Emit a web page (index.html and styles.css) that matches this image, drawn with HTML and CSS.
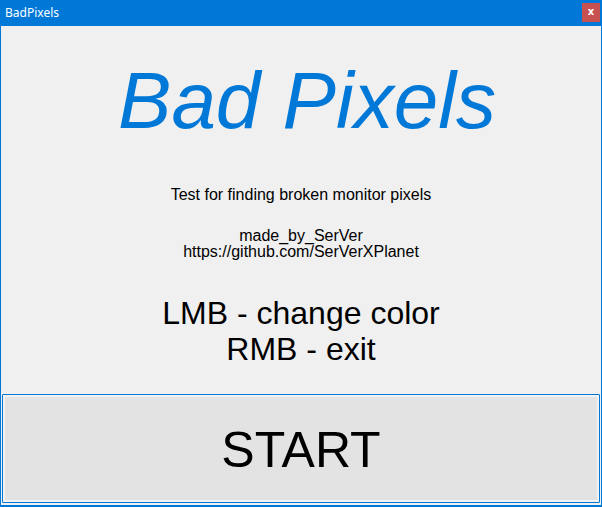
FILE: index.html
```html
<!DOCTYPE html>
<html>
<head>
<meta charset="utf-8">
<link rel="stylesheet" href="styles.css">
</head>
<body>
<div class="window">
  <div class="titlebar">
    <span class="title">BadPixels</span>
    <span class="close">x</span>
  </div>
  <div class="content">
    <div class="logo">Bad Pixels</div>
    <div class="desc">Test for finding broken monitor pixels</div>
    <div class="credits">
      <div>made_by_SerVer</div>
      <div>https://github.com/SerVerXPlanet</div>
    </div>
    <div class="controls">
      <div>LMB - change color</div>
      <div>RMB - exit</div>
    </div>
    <button class="start">START</button>
  </div>
</div>
</body>
</html>
```
FILE: styles.css
```css
html, body {
  margin: 0;
  padding: 0;
  background: #f0f0f0;
}
.window {
  width: 602px;
  height: 507px;
  box-sizing: border-box;
  border-left: 1px solid #0078d7;
  border-right: 1px solid #0078d7;
  border-bottom: 2px solid #0078d7;
  display: flex;
  flex-direction: column;
  background: #f0f0f0;
  font-family: "Liberation Sans", Arial, sans-serif;
  color: #000;
}
.titlebar {
  height: 26px;
  background: #0078d7;
  display: flex;
  justify-content: space-between;
  align-items: flex-start;
  flex-shrink: 0;
}
.title {
  font-family: "Noto Sans", sans-serif;
  font-size: 12px;
  line-height: 26px;
  color: #fff;
  padding-left: 4px;
}
.close {
  margin-top: 3px;
  margin-right: 1px;
  width: 18px;
  height: 19px;
  background: #c75050;
  color: #fff;
  font-family: "DejaVu Sans", sans-serif;
  font-weight: bold;
  font-size: 10px;
  line-height: 18px;
  text-align: center;
}
.content {
  flex: 1;
  display: flex;
  flex-direction: column;
  align-items: center;
  text-align: center;
}
.logo {
  margin-top: 35px;
  padding-left: 12px;
  font-size: 80px;
  line-height: 80px;
  font-style: italic;
  color: #0078d7;
}
.desc {
  margin-top: 44.5px;
  font-size: 16px;
  line-height: 18px;
}
.credits {
  margin-top: 24px;
  font-size: 16px;
  line-height: 16px;
}
.controls {
  margin-top: 35.7px;
  font-size: 32px;
  line-height: 36px;
}
.start {
  margin: auto 1px 2px 1px;
  align-self: stretch;
  height: 109px;
  box-sizing: border-box;
  border: 1px solid #0078d7;
  border-radius: 1px;
  box-shadow: inset 0 0 0 2px #f2f2f2;
  background: #e3e3e3;
  font-family: "Liberation Sans", Arial, sans-serif;
  font-size: 50px;
  color: #000;
  padding: 3px 0 0 0;
}
```
